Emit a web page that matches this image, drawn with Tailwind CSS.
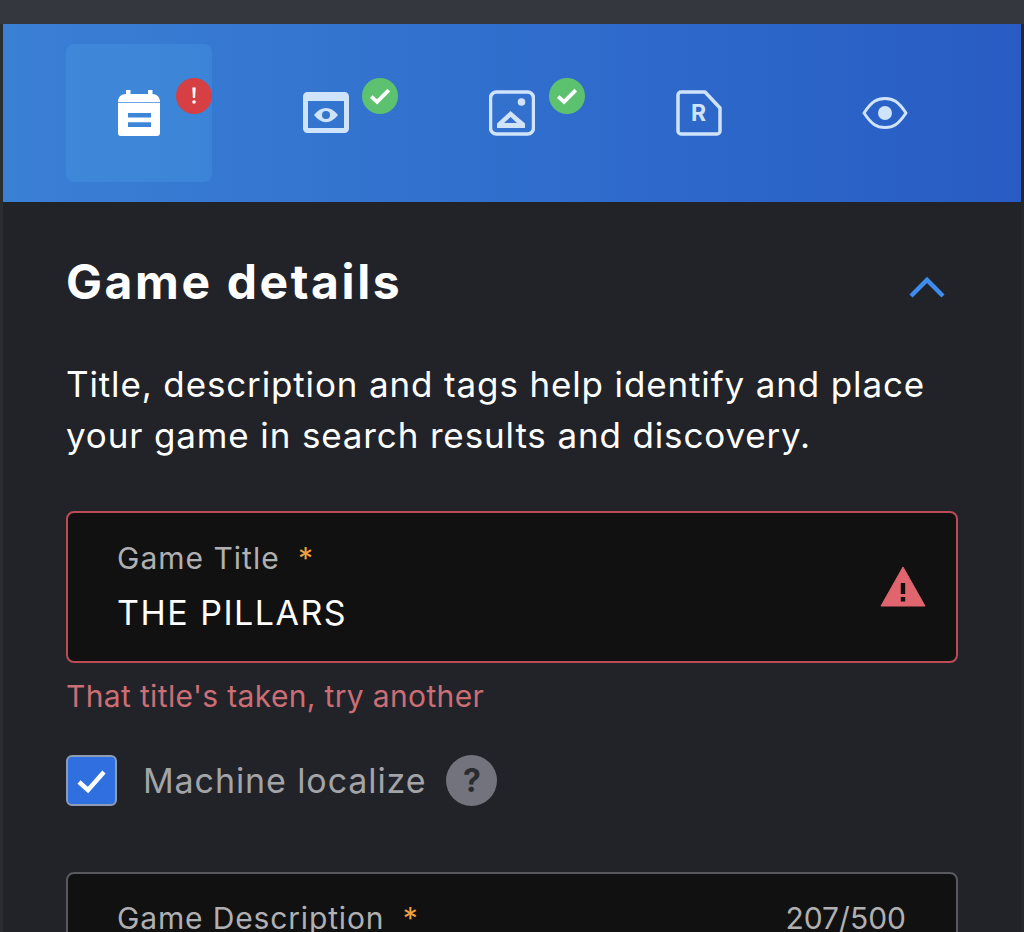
<!DOCTYPE html>
<html>
  <head>
    <title>Game details</title>
    <script src="https://cdn.jsdelivr.net/npm/@tailwindcss/browser@4"></script>
  </head>
  <body class="h-[932px] w-[1024px] overflow-hidden bg-[#222328] font-['Inter','Liberation_Sans',sans-serif] text-white">
    <div class="h-6 bg-[#34373d]"></div>
    <div class="flex h-[908px] flex-col overflow-hidden border-l-[3px] border-r-[3px] border-l-[#2b2d31] border-r-[#26272b]">
      <div class="flex h-[178px] shrink-0 justify-between bg-gradient-to-r from-[#3a80d5] to-[#285cc4] pl-[63px] pr-[63px] py-5">
        <div class="relative flex w-[146px] items-center justify-center rounded-lg bg-[#4c9ee6]/30">
          <svg class="h-[46px] w-[46px]" viewBox="0 0 46 46" fill="#fff">
            <rect x="10" y="0" width="4.500" height="6"/>
            <rect x="32" y="0" width="4.500" height="6"/>
            <path d="M2 12c0-5 3-8 8-8h26c5 0 8 3 8 8z"/>
            <path fill-rule="evenodd" d="M2 12.800h42V43a3 3 0 0 1-3 3H5a3 3 0 0 1-3-3zm10 10.200v4.500h23V23zm0 9.200v4.800h23v-4.800z"/>
          </svg>
          <div class="absolute right-0 top-[34px] flex h-9 w-9 items-center justify-center rounded-full bg-[#d63f43]">
            <svg class="h-5 w-5" viewBox="0 0 20 20" fill="#fff"><path d="M8.300 1.500h3.400l-.6 10.500H8.900z"/><circle cx="10" cy="16" r="1.800"/></svg>
          </div>
        </div>
        <div class="relative flex w-[146px] items-center justify-center">
          <svg class="h-[46px] w-[46px]" viewBox="0 0 46 46">
            <rect x="2.500" y="4.500" width="41" height="36" rx="2" fill="none" stroke="#cfe3fb" stroke-width="5"/>
            <rect x="2" y="3" width="42" height="8" fill="#cfe3fb"/>
            <path d="M11 25c7-9.500 17-9.500 24 0-7 9.500-17 9.500-24 0z" fill="#cfe3fb"/>
            <circle cx="23" cy="25" r="4" fill="#3374cd"/>
          </svg>
          <div class="absolute right-[1px] top-[34px] flex h-9 w-9 items-center justify-center rounded-full bg-[#5dc26f]">
            <svg class="h-7 w-7" viewBox="0 0 24 24" fill="none" stroke="#fff" stroke-width="3.200"><path d="M4.500 12.500l5 4.500 10-10"/></svg>
          </div>
        </div>
        <div class="relative flex w-[146px] items-center justify-center">
          <svg class="h-[46px] w-[46px]" viewBox="0 0 46 46">
            <rect x="1.500" y="2" width="43" height="42" rx="6" fill="#3a75cf" fill-opacity="0.4" stroke="#cfe3fb" stroke-width="3.500"/>
            <circle cx="32.500" cy="12" r="3.800" fill="#cfe3fb"/>
            <path fill-rule="evenodd" d="M21.500 21L36 33.500V38H8v-4.500zm0 6l-6.500 6h13z" fill="#cfe3fb"/>
          </svg>
          <div class="absolute right-0 top-[34px] flex h-9 w-9 items-center justify-center rounded-full bg-[#5dc26f]">
            <svg class="h-7 w-7" viewBox="0 0 24 24" fill="none" stroke="#fff" stroke-width="3.200"><path d="M4.500 12.500l5 4.500 10-10"/></svg>
          </div>
        </div>
        <div class="flex w-[146px] items-center justify-center">
          <div class="relative h-[46px] w-[46px]">
            <svg class="h-[46px] w-[46px]" viewBox="0 0 46 46">
              <path d="M5 2h24l15 16v23a3 3 0 0 1-3 3H5a3 3 0 0 1-3-3V5a3 3 0 0 1 3-3z" fill="none" stroke="#cfe3fb" stroke-width="3.500" stroke-linejoin="round"/>
            </svg>
            <span class="absolute inset-0 flex items-center justify-center text-[23px] font-bold text-[#cfe3fb]">R</span>
          </div>
        </div>
        <div class="flex w-[146px] items-center justify-center">
          <svg class="h-[46px] w-[46px]" viewBox="0 0 46 46">
            <path d="M2 23C10 11 15 8.500 23 8.500S36 11 44 23C36 35 31 37.500 23 37.500S10 35 2 23z" fill="none" stroke="#cfe3fb" stroke-width="3" stroke-linejoin="round"/>
            <circle cx="23" cy="23" r="7" fill="#cfe3fb"/>
          </svg>
        </div>
      </div>

      <div class="flex flex-col pl-[63px] pr-[63px]">
        <div class="mt-[50px] flex h-[60px] items-center justify-between">
          <h2 class="text-[48px] font-bold tracking-[2.600px]">Game details</h2>
          <svg class="mr-[13px] mt-[10px] h-[22px] w-[36px]" viewBox="0 0 36 22" fill="none" stroke="#3f8cf0" stroke-width="4.500"><path d="M2 20L18 4l16 16"/></svg>
        </div>
        <p class="mt-[47px] text-[35px] leading-[51px] tracking-[0.860px]">Title, description and tags help identify and place your game in search results and discovery.</p>

        <div class="mt-[50px] flex h-[152px] w-[892px] items-center justify-between rounded-lg border-2 border-[#bb4c55] bg-[#111111] pl-[49px] pr-[30px]">
          <div class="-translate-y-[2px]">
            <div class="text-[30px] leading-[40px] tracking-[1px] text-[#b0b0b2]">Game Title <span class="ml-[9px] text-[#f0a040]">*</span></div>
            <div class="mt-[15px] text-[34px] leading-[40px] tracking-[1.500px]">THE PILLARS</div>
          </div>
          <svg class="mt-[2px] h-[46px] w-[46px]" viewBox="0 0 46 46">
            <path d="M23 2L45 41H1z" fill="#e0656f" stroke="#e0656f" stroke-linejoin="round"/>
            <rect x="20.800" y="18" width="4.400" height="11" fill="#111"/>
            <rect x="20.800" y="32" width="4.400" height="4.500" fill="#111"/>
          </svg>
        </div>
        <div class="mt-[13px] text-[30px] leading-[40px] tracking-[0.350px] text-[#cc6e76]">That title's taken, try another</div>

        <div class="mt-[39px] flex items-center">
          <div class="flex h-[51px] w-[51px] items-center justify-center rounded-md border-2 border-[#8d9db5] bg-[#2f6fe0]">
            <svg class="h-9 w-9" viewBox="0 0 36 36" fill="none" stroke="#fff" stroke-width="4.500"><path d="M5 19l9 8L30 9"/></svg>
          </div>
          <span class="ml-[26px] text-[34px] leading-[51px] tracking-[0.900px] text-[#a3a4a8]">Machine localize</span>
          <div class="ml-[20px] flex h-[51px] w-[51px] items-center justify-center rounded-full bg-[#72737d] text-[32px] font-bold text-[#2a2b30]">?</div>
        </div>

        <div class="mt-[66px] h-[200px] w-[892px] rounded-lg border-2 border-[#58595d] bg-[#111111] pl-[49px] pr-[50px] pt-6">
          <div class="flex items-center justify-between text-[30px] leading-[40px] text-[#b0b0b2]">
            <div class="tracking-[0.850px]">Game Description <span class="ml-[9px] text-[#f0a040]">*</span></div>
            <div>207/500</div>
          </div>
        </div>
      </div>
    </div>
  </body>
</html>
